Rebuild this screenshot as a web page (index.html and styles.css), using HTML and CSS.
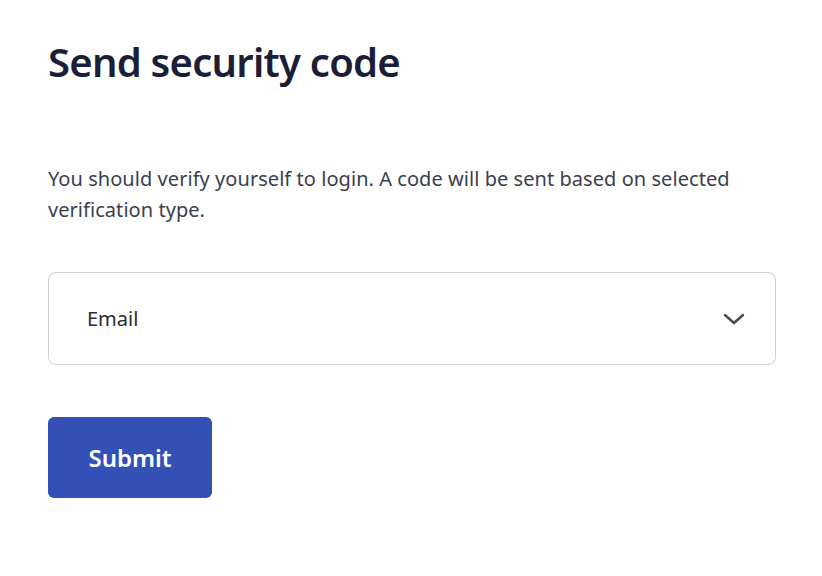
FILE: index.html
```html
<!DOCTYPE html>
<html>
<head>
<meta charset="utf-8">
<link rel="stylesheet" href="styles.css">
</head>
<body>
<main class="page">
  <h1 class="title">Send security code</h1>
  <p class="desc">You should verify yourself to login. A code will be sent based on selected verification type.</p>
  <div class="select">
    <span class="select-value">Email</span>
    <svg class="chevron" width="22" height="12" viewBox="0 0 22 12"><path d="M2 2 L11 10 L20 2" fill="none" stroke="#4a4a4a" stroke-width="2.4" stroke-linecap="round" stroke-linejoin="round"/></svg>
  </div>
  <button class="submit">Submit</button>
</main>
</body>
</html>
```
FILE: styles.css
```css
html, body { margin: 0; padding: 0; background: #fff; }
body { font-family: "Noto Sans", "Open Sans", sans-serif; }
.page { padding: 33px 46px 0 48px; display: flex; flex-direction: column; align-items: flex-start; }
.title { margin: 0; font-size: 40px; line-height: 58px; font-weight: 600; color: #1b1e36; letter-spacing: -0.75px; }
.desc { margin: 72px 0 0; font-size: 20px; line-height: 31px; color: #3b3e50; max-width: 700px; letter-spacing: 0.05px; }
.select { margin-top: 47px; align-self: stretch; height: 91px; border: 1px solid #cfcfd4; border-radius: 8px; display: flex; align-items: center; justify-content: space-between; padding: 0 30px 0 38px; }
.select-value { font-size: 20px; color: #2c2c30; }
.chevron { display: block; }
.submit { margin-top: 52px; width: 164px; height: 81px; border: none; border-radius: 6px; background: #3350b7; color: #fff; font-family: inherit; font-size: 24px; font-weight: 600; }
```
